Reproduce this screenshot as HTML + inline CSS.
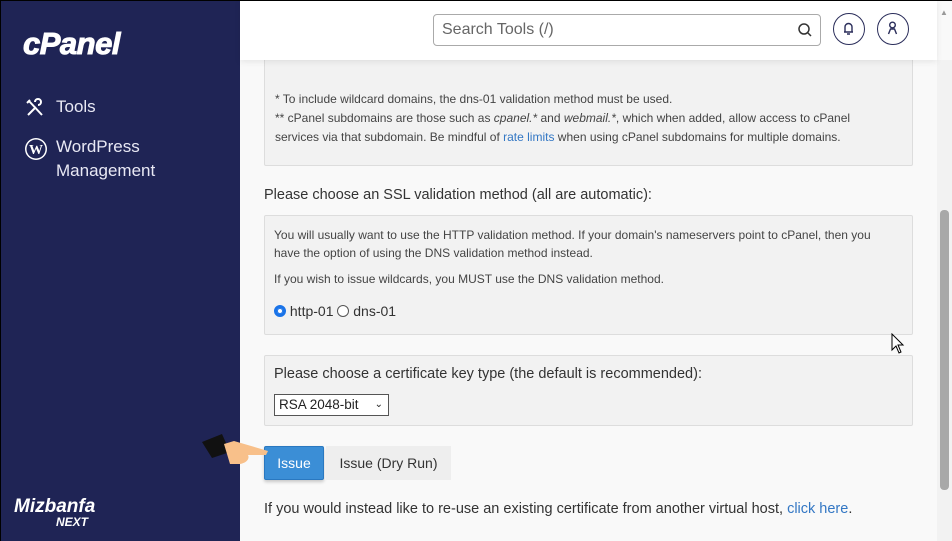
<!DOCTYPE html>
<html><head><style>
*{box-sizing:border-box;margin:0;padding:0}
body{width:952px;height:541px;overflow:hidden;background:#f9f9f9;font-family:"Liberation Sans",sans-serif;color:#333;position:relative}
.side{position:absolute;left:0;top:0;width:240px;height:541px;background:#1f2455;color:#eef}
.logo{position:absolute;left:23px;top:26px;font:italic bold 31px "Liberation Sans",sans-serif;color:#fff;letter-spacing:-0.5px;-webkit-text-stroke:1px #fff}
.nav{position:absolute;left:56px;font-size:17px;color:#e8e8f4;line-height:24px}
.hdr{position:absolute;left:240px;top:0;width:697px;height:60px;background:#fff;box-shadow:0 2px 6px rgba(0,0,0,.08);z-index:2}
.search{position:absolute;left:193px;top:14px;width:388px;height:32px;border:1px solid #aaa;border-radius:4px;font-size:16px;color:#666;padding:6px 8px}
.circ{position:absolute;top:13px;width:32px;height:32px;border:1.5px solid #2a2d5a;border-radius:50%}
.panel{position:absolute;left:264px;width:649px;background:#f2f2f2;border:1px solid #ddd;border-radius:2px;font-size:12px;color:#444}
.p{position:absolute;font-size:14.5px;color:#333}
a{color:#3377c4;text-decoration:none}
.sb{position:absolute;left:937px;top:60px;width:15px;height:481px;background:#f2f2f2}
</style></head><body>
<div class="side">
<div class="logo">cPanel</div>
<svg style="position:absolute;left:25px;top:98px" width="20" height="20" viewBox="0 0 20 20" stroke="#fff" stroke-width="2" fill="none"><path d="M3 17L11 9M13 7a3 3 0 10-3-3M4 3l13 14M2 5l3-3"/></svg>
<div class="nav" style="top:95px">Tools</div>
<svg style="position:absolute;left:24px;top:137px" width="24" height="24" viewBox="0 0 24 24"><circle cx="12" cy="12" r="11" fill="#fff"/><circle cx="12" cy="12" r="9.5" fill="#1f2455"/><text x="12" y="17" text-anchor="middle" font-family="Liberation Serif" font-weight="bold" font-size="14" fill="#fff">W</text></svg>
<div class="nav" style="top:135px">WordPress<br>Management</div>
<div style="position:absolute;left:14px;top:496px;font:italic bold 19px 'Liberation Sans',sans-serif;color:#fff">Mizbanfa</div>
<div style="position:absolute;left:56px;top:515px;font:italic bold 12px 'Liberation Sans',sans-serif;color:#fff">NEXT</div>
</div>
<div class="panel" style="top:56px;height:110px;border-top:none">
<div style="position:absolute;left:10px;top:34px;line-height:19px">* To include wildcard domains, the dns-01 validation method must be used.<br>** cPanel subdomains are those such as <i>cpanel.*</i> and <i>webmail.*</i>, which when added, allow access to cPanel<br>services via that subdomain. Be mindful of <a>rate limits</a> when using cPanel subdomains for multiple domains.</div>
</div>
<div class="hdr"><div class="search">Search Tools (/)</div>
<svg style="position:absolute;left:557px;top:22px" width="16" height="16" viewBox="0 0 16 16" fill="none" stroke="#333" stroke-width="1.5"><circle cx="7" cy="7" r="5"/><path d="M11 11l3 3"/></svg>
<div class="circ" style="left:593px"><svg width="29" height="29" viewBox="0 0 29 29" fill="none" stroke="#2a2d5a" stroke-width="1.4"><path d="M10 18h9M11 18v-5a3.5 3.5 0 017 0v5M13 20h3"/></svg></div>
<div class="circ" style="left:637px"><svg width="29" height="29" viewBox="0 0 29 29" fill="none" stroke="#2a2d5a" stroke-width="1.4"><circle cx="14.5" cy="11" r="2.8"/><path d="M10.5 20l2-5h4l2 5"/></svg></div></div>
<div class="p" style="left:264px;top:187px">Please choose an SSL validation method (all are automatic):</div>
<div class="panel" style="top:215px;height:120px">
<div style="position:absolute;left:9px;top:10px;line-height:18px">You will usually want to use the HTTP validation method. If your domain's nameservers point to cPanel, then you<br>have the option of using the DNS validation method instead.</div>
<div style="position:absolute;left:9px;top:56px">If you wish to issue wildcards, you MUST use the DNS validation method.</div>
<div style="position:absolute;left:9px;top:87px;font-size:14px;color:#333"><span style="display:inline-block;width:12px;height:12px;border-radius:50%;border:3px solid #1a73e8;background:#fff;box-shadow:0 0 0 1px #1a73e8 inset;vertical-align:-1px"></span> http-01 <span style="display:inline-block;width:12px;height:12px;border-radius:50%;border:1px solid #555;background:#fff;vertical-align:-1px"></span> dns-01</div>
</div>
<div class="panel" style="top:355px;height:71px">
<div style="position:absolute;left:9px;top:10px;font-size:14.5px;color:#333">Please choose a certificate key type (the default is recommended):</div>
<div style="position:absolute;left:9px;top:38px;width:115px;height:22px;border:1px solid #555;background:#fff;font-size:13.5px;color:#222;padding:2px 4px">RSA 2048-bit <span style="position:absolute;right:5px;font-size:10px;top:4px">&#8964;</span></div>
</div>
<div style="position:absolute;left:264px;top:446px;width:60px;height:34px;background:#3b8ed6;border:1px solid #2a78c0;border-radius:2px;color:#fff;font-size:14px;text-align:center;line-height:32px;box-shadow:0 2px 3px rgba(0,0,0,.2)">Issue</div>
<div style="position:absolute;left:326px;top:446px;width:125px;height:34px;background:#eee;color:#333;font-size:14px;text-align:center;line-height:34px">Issue (Dry Run)</div>
<svg style="position:absolute;left:200px;top:430px" width="80" height="40" viewBox="0 0 80 40"><path d="M2 12l20-8 8 18-18 6z" fill="#111"/><path d="M24 14l10-3 34 10-2 4-18 0c2 4-2 8-8 9l-10 0z" fill="#f8c08a"/></svg>
<div class="p" style="left:264px;top:501px">If you would instead like to re-use an existing certificate from another virtual host, <a>click here</a>.</div>
<div class="sb"><div style="position:absolute;left:3px;top:150px;width:9px;height:280px;background:#a8a8a8;border-radius:4px"></div><div style="position:absolute;left:3px;top:-52px;color:#999;font-size:8px">▲</div></div>
<svg style="position:absolute;left:891px;top:333px" width="14" height="22" viewBox="0 0 14 22"><path d="M1 1v16l4-4 3 7 2-1-3-7h5z" fill="#fff" stroke="#000"/></svg>
<div style="position:absolute;left:0;top:0;width:952px;height:1px;background:#000;z-index:5"></div>
<div style="position:absolute;left:0;top:0;width:1px;height:541px;background:#000;z-index:5"></div>
</body></html>
